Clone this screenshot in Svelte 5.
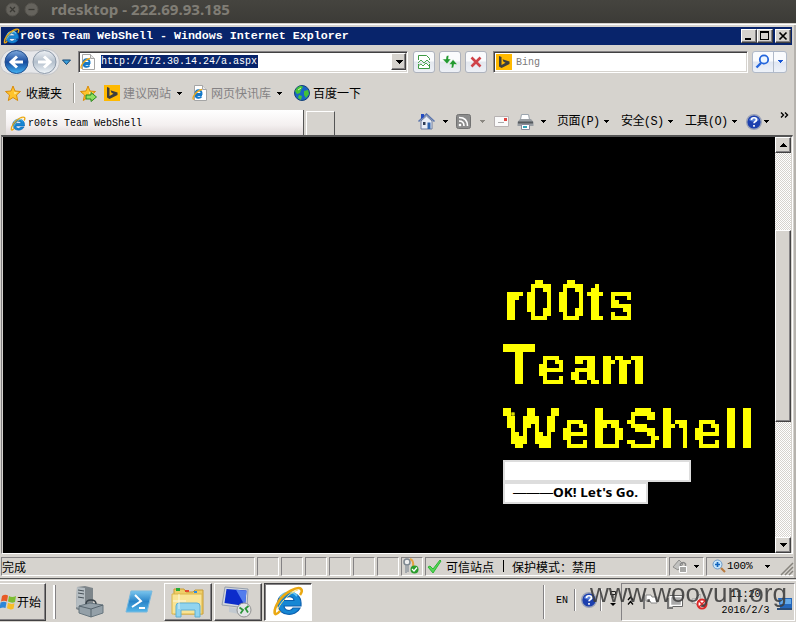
<script>
  const lines = [
    { text: 'r00ts', y: 47.7, sx: 0.88, xs: [1, 22.6, 54.6, 84, 103] },
    { text: 'Team', y: 111.7, sx: 0.89, xs: [-1, 34.5, 67, 97] },
    { text: 'W', y: 175.7, sx: 1.01, xs: [0] },
    { text: 'ebShell', y: 175.7, sx: 0.88, xs: [58.5, 89, 122, 157, 190.5, 221, 237] }
  ];
  const place = (xs, sx) => xs.map((x) => (x / sx).toFixed(1)).join(' ');
  const menus = ['页面(P)', '安全(S)', '工具(O)'];
  const emptyPanels = [1, 2, 3, 4, 5, 6];
</script>

{#snippet ie(size)}
  <svg width={size} height={size} viewBox="0 0 32 32">
    <circle cx="16.500" cy="17" r="9.500" fill="#fff" />
    <path d="M29 20H12c.5 5 7 6 9 2h7C24 31 7 31 5.500 18 5 4 29 2 29 17zM12 14.500h10c-.5-5-9-5-10 0z" fill="#1687d4" stroke="#0b5fae" stroke-width="1.200" />
    <path d="M8 12c3-6 12-8 17-2" fill="none" stroke="#64c6f5" stroke-width="2" />
    <path d="M8 25C1 33 1 24 7 15S26 0 29 3c1.500 1.500.5 4-1 6" fill="none" stroke="#eaa812" stroke-width="2.600" />
    <path d="M6 24c-1-3 11-18 20-20" fill="none" stroke="#ffe27a" stroke-width="1" />
  </svg>
{/snippet}

{#snippet page()}
  <svg width="16" height="16" viewBox="0 0 16 16">
    <path d="M2.500.5h8l4 4v11h-12z" fill="#fff" stroke="#a5a5a5" />
    <path d="M10.500.5v4h4" fill="#e7e7e7" stroke="#a5a5a5" />
    <path d="M10 10H3.500c.5 3.500 4.500 3.500 6 1.500M3.500 9c0-5 6.500-5 6 0z" fill="none" stroke="#1478c8" stroke-width="2" />
    <path d="M2 14C-1 15 3 6 10 4.500" fill="none" stroke="#e9a81e" stroke-width="1.300" />
  </svg>
{/snippet}

{#snippet bing()}
  <svg width="16" height="16" viewBox="0 0 16 16">
    <path d="M0 0h16v16H0z" fill="#ffb900" />
    <path d="M3 2l2.500 1v8l4-2.300-2-1L6.500 5.200 13.500 7.500v2.500L5.500 14 3 12.500z" fill="#3d3d3d" />
  </svg>
{/snippet}

{#snippet star()}
  <path d="M8 1l2 5 5.500.5-4 3.500 1.200 5.500L8 12.500 3.300 15.500 4.500 10 .5 6.500 6 6z" fill="#ffc32b" stroke="#d98c0b" />
  <path d="M8 3l1 4 4 .5-3.500 2z" fill="#ffe88e" />
{/snippet}

{#snippet help()}
  <svg width="16" height="16" viewBox="0 0 16 16">
    <circle cx="8" cy="8" r="7.300" fill="#1c3fae" stroke="#9aa2b8" stroke-width="1.400" />
    <path d="M3 6c1-4 9-4 10 0-3 2-7 2-10 0" fill="#5b82da" />
    <path d="M5.500 6c0-3 5-3 5 0 0 1.500-2.500 1.500-2.500 3.300M8 11v1.700" fill="none" stroke="#fff" stroke-width="1.700" />
  </svg>
{/snippet}

{#snippet caret(color)}
  <svg class="caret" width="5" height="3" viewBox="0 0 5 3" shape-rendering="crispEdges"><path d="M0 0h5v1H4v1H3v1H2V2H1V1H0z" fill={color} /></svg>
{/snippet}

<div class="screen">
  <header class="host">
    <span class="round"><svg width="13" height="13" viewBox="0 0 13 13"><circle cx="6.500" cy="6.500" r="6.500" fill="#65635d" stroke="#55534d" /><path d="M4 4l5 5M9 4l-5 5" stroke="#3a3934" stroke-width="1.300" /></svg></span>
    <span class="round"><svg width="13" height="13" viewBox="0 0 13 13"><circle cx="6.500" cy="6.500" r="6.500" fill="#65635d" stroke="#55534d" /><path d="M3.500 6.500h6" stroke="#3a3934" stroke-width="1.300" /></svg></span>
    <svg class="hosttitle" width="190" height="20"><text x="0" y="12" textLength="179" lengthAdjust="spacingAndGlyphs">rdesktop - 222.69.93.185</text></svg>
  </header>

  <div class="window">
    <div class="title">
      {@render ie(17)}
      <span>r00ts Team WebShell - Windows Internet Explorer</span>
      <div class="controls">
        <i><svg width="12" height="10" shape-rendering="crispEdges"><path d="M2 7h6v2H2z" /></svg></i>
        <i><svg width="12" height="10" shape-rendering="crispEdges"><path d="M1 0h9v9H1zM2 2v6h7V2z" fill-rule="evenodd" /></svg></i>
        <i class="close"><svg width="12" height="10"><path d="M2.500 1.500l7 7M9.500 1.500l-7 7" stroke="#000" stroke-width="1.700" /></svg></i>
      </div>
    </div>

    <div class="nav">
      <svg width="71" height="30" viewBox="0 0 71 30">
        <defs>
          <linearGradient id="blue" x2="0" y2="1"><stop stop-color="#7fa9dc" /><stop offset=".5" stop-color="#174b9d" /><stop offset="1" stop-color="#43b4f5" /></linearGradient>
          <linearGradient id="pale" x2="0" y2="1"><stop stop-color="#eef1f5" /><stop offset=".5" stop-color="#b3bfcc" /><stop offset="1" stop-color="#f1f6fa" /></linearGradient>
        </defs>
        <path d="M14 2Q29 6 43 2c19 0 19 26 0 26Q29 24 14 28-5 27-1 12 3 2 14 2" fill="#e6e7ea" stroke="#c4c5c8" />
        <circle cx="14.500" cy="15" r="11.500" fill="url(#blue)" stroke="#234f8d" />
        <circle cx="42.500" cy="15" r="11.500" fill="url(#pale)" stroke="#8b98a8" />
        <path d="M21 15H9m6-5.500L9 15l6 5.500" fill="none" stroke="#fff" stroke-width="3" />
        <path d="M36 15h12m-6-5.500l6 5.500-6 5.500" fill="none" stroke="#fff" stroke-width="3" />
        <path d="M60.500 13h8l-4 4.500z" fill="#3aa0dc" stroke="#174876" />
      </svg>
      <div class="address">
        {@render page()}
        <span class="url">http://172.30.14.24/a.aspx</span>
        <b class="drop"><svg width="7" height="4" shape-rendering="crispEdges"><path d="M0 0h7v1H6v1H5v1H4v1H3V3H2V2H1V1H0z" /></svg></b>
      </div>
      <div class="tools">
        <b><svg width="14" height="16" viewBox="0 0 14 16"><path d="M1.500 6V1.500h8l3 3V6M1.500 10v4.500h11V10" fill="#fff" stroke="#3c9a43" /><path d="M1 9l3-3 3 3 3-3 3 3M1 12l3-2 2 2 3-3 3 3" fill="none" stroke="#4da653" /></svg></b>
        <b><svg width="16" height="16" viewBox="0 0 16 16"><path d="M7 1.500C4 1 4 3 4 5H.5L5 10l4-5H6.500c0-1 0-2 .5-3.500zM9 14c3 .5 3-1.500 3-3.500h3.500L11 5.500l-4 5h2.500c0 1 0 2-.5 3.500z" fill="#239a31" stroke="#fff" stroke-width=".5" /></svg></b>
        <b><svg width="14" height="14" viewBox="0 0 14 14"><path d="M2.500 2.500l9 9M11.500 2.500l-9 9" stroke="#cf4248" stroke-width="2.600" /></svg></b>
      </div>
      <div class="search">{@render bing()}<span>Bing</span></div>
      <div class="go">
        <svg width="20" height="20" viewBox="0 0 20 20"><circle cx="11" cy="7.500" r="4.200" fill="#eef7ff" stroke="#2566dc" stroke-width="1.800" /><path d="M8 11l-4.500 4.500" stroke="#2566dc" stroke-width="2.400" /></svg>
        <em>{@render caret('#1655d5')}</em>
      </div>
    </div>

    <div class="favs">
      <svg width="16" height="16" viewBox="0 0 16 16">{@render star()}</svg>
      <span class="favlabel">收藏夹</span>
      <i class="rule"></i>
      <svg width="17" height="17" viewBox="0 0 17 17">{@render star()}<path d="M6 10h5V7.500l5.500 4.500-5.500 4.500V14H6z" fill="#8fe05e" stroke="#258a24" /></svg>
      <span class="bingico">{@render bing()}</span>
      <span class="dim">建议网站</span>{@render caret('#000')}
      <span class="pageico">{@render page()}</span>
      <span class="dim news">网页快讯库</span>{@render caret('#000')}
      <svg class="globe" width="16" height="16" viewBox="0 0 16 16"><circle cx="8" cy="8" r="7.500" fill="#1866c6" stroke="#154278" /><path d="M3 3c3-3 5-2 6-1L7 5 6 8 3 9 1 6zM10 6l4-1 1 4-3 4-2-3zM5 10l3 1-1 4-3-2z" fill="#43c237" /><path d="M4 5l3-2" stroke="#c8f4b0" /></svg>
      <span>百度一下</span>
    </div>

    <div class="tabs">
      <div class="tab">{@render ie(16)}<span>r00ts Team WebShell</span></div>
      <div class="newtab"></div>
      <div class="commands">
        <svg width="17" height="17" viewBox="0 0 17 17"><path d="M3 8v8h11V8L8.500 3z" fill="#e8edf6" stroke="#6c7da0" /><path d="M.5 8.500l8-7.500 8 7.500" fill="none" stroke="#5b75ad" stroke-width="1.600" /><path d="M3 1h3v3L3 6z" fill="#234bc1" /><path d="M9.500 9.500h3V16h-3z" fill="#2e63ae" /><path d="M5 9h2.500v3H5z" fill="#2d3b56" /></svg>
        {@render caret('#000')}
        <svg class="feed" width="15" height="15" viewBox="0 0 15 15"><rect x=".5" y=".5" width="14" height="14" rx="2" fill="#8c8c8c" stroke="#727272" /><circle cx="4" cy="11" r="1.300" fill="#fff" /><path d="M3 7q5 0 5 5M3 3.500q8.500 0 8.500 8.500" fill="none" stroke="#fff" stroke-width="1.600" /></svg>
        {@render caret('#8b8882')}
        <svg class="mail" width="15" height="11" viewBox="0 0 15 11"><path d="M.5.5h14v10H.5z" fill="#fafafa" stroke="#b7b2b2" /><path d="M10 2h3v3h-3z" fill="#df4540" /><path d="M4 6.500h6" stroke="#aaa" /></svg>
        <svg class="printer" width="17" height="16" viewBox="0 0 17 16"><path d="M4.500.5h7l1 5h-9z" fill="#fff" stroke="#9ba4ad" /><path d="M3 5h11l2.500 3v4H.5V8z" fill="#989da2" /><path d="M1 8.500h15" stroke="#55595d" stroke-width="2" /><path d="M4.500 10.500h8v5h-8z" fill="#fff" stroke="#889" /><path d="M6 12h4v2H6z" fill="#32a2b8" /></svg>
        {@render caret('#000')}
        {#each menus as menu}
          <span class="menu">{menu}</span>{@render caret('#000')}
        {/each}
        <span class="helpico">{@render help()}</span>{@render caret('#000')}
        <svg class="more" width="9" height="7"><path d="M1 .5l2.500 2.500L1 5.500M5 .5l2.500 2.500L5 5.500" fill="none" stroke="#000" stroke-width="1.400" /></svg>
      </div>
    </div>

    <div class="view">
      <main>
        <svg width="260" height="188">
          <filter id="blocks" filterUnits="userSpaceOnUse" x="0" y="0" width="260" height="188" color-interpolation-filters="sRGB">
            <feFlood x="1" y="0" width="1" height="1" flood-color="#fff" result="dot" />
            <feOffset in="dot" dx="0" dy="0" x="0" y="0" width="4" height="4" />
            <feTile result="grid" />
            <feComposite in="SourceGraphic" in2="grid" operator="in" />
            <feComponentTransfer><feFuncA type="linear" slope="200" intercept="-140" /></feComponentTransfer>
            <feOffset dx="0" dy="1" />
            <feMorphology operator="dilate" radius="1" result="a" />
            <feOffset in="a" dx="1" dy="0" result="b" />
            <feMerge result="c"><feMergeNode in="a" /><feMergeNode in="b" /></feMerge>
            <feOffset in="c" dx="0" dy="1" result="d" />
            <feMerge><feMergeNode in="c" /><feMergeNode in="d" /></feMerge>
          </filter>
          <g filter="url(#blocks)">
            {#each lines as line}
              <text class="big" transform="scale({line.sx} 1)" x={place(line.xs, line.sx)} y={line.y}>{line.text}</text>
            {/each}
          </g>
        </svg>
        <div class="input"></div>
        <div class="submit"><span>———</span><svg width="86" height="18"><text x="0" y="13" textLength="85" lengthAdjust="spacingAndGlyphs">OK! Let's Go.</text></svg></div>
      </main>
      <div class="scroll">
        <b><svg width="7" height="4" shape-rendering="crispEdges"><path d="M3 0h1v1h1v1h1v1h1v1H0V3h1V2h1V1h1z" /></svg></b>
        <b class="thumb"></b>
        <b class="down"><svg width="7" height="4" shape-rendering="crispEdges"><path d="M0 0h7v1H6v1H5v1H4v1H3V3H2V2H1V1H0z" /></svg></b>
      </div>
    </div>

    <div class="status">
      <div class="panel done">完成</div>
      {#each emptyPanels as p}<div class="panel small"></div>{/each}
      <div class="panel small"><svg width="18" height="16" viewBox="0 0 18 16"><circle cx="5" cy="4" r="3" fill="#eee" stroke="#7d8790" stroke-width="1.500" /><path d="M4 7v8M6 7v7" stroke="#939ba2" stroke-width="1.500" /><path d="M8 1q4 1 3 8" fill="none" stroke="#e5a341" stroke-width="2" /><circle cx="12.500" cy="11.500" r="4" fill="#2b9d2e" /><path d="M10 11l2 2 3-3.500" fill="none" stroke="#fff" stroke-width="1.300" /></svg></div>
      <div class="panel zone"><svg width="16" height="15" viewBox="0 0 16 15"><path d="M1 8l2-1 3 3 7-9 1 1-8 12z" fill="#55d556" stroke="#2db534" /></svg><span>可信站点</span><i></i><span>保护模式：禁用</span></div>
      <div class="panel lock"><svg width="18" height="15" viewBox="0 0 18 15"><path d="M1 8L7 1l4 4-5 6z" fill="#c1c1bf" stroke="#8f8f8d" /><path d="M8.500 7V5q3-3 5 0v2" fill="none" stroke="#888" stroke-width="1.500" /><path d="M7.500 7.500h7v6h-7z" fill="#a7a7a5" stroke="#fff" /></svg>{@render caret('#000')}</div>
      <div class="panel zoom"><svg width="14" height="14" viewBox="0 0 14 14"><circle cx="5.500" cy="5.500" r="4.500" fill="#c6e6fd" stroke="#6f9ac5" /><path d="M3 5.500h5M5.500 3v5" stroke="#1264bd" stroke-width="1.700" /><path d="M9 9l4 4" stroke="#b97b40" stroke-width="2.200" /></svg><span>100%</span>{@render caret('#000')}<svg class="grip" width="13" height="13"><path d="M1 13L13 1M5 13l8-8M9 13l4-4" stroke="#87847d" stroke-width="1.500" /></svg></div>
    </div>
  </div>

  <footer>
    <div class="start"><svg width="16" height="16" viewBox="0 0 16 16"><path d="M2 2q3-2 6-.5L7 7.500Q4 6 1 7.500z" fill="#e85a25" /><path d="M9 2q3 2 7 0l-1 6q-3 1.500-7-.5z" fill="#7dbd32" /><path d="M.5 8.500Q4 7 6.500 8.500l-1 5.500q-3-1-6 .5z" fill="#2d86d8" /><path d="M8 8.800q3 2 6.500.5l-1 5.500q-3 1.500-6.500-.5z" fill="#f8bd27" /></svg><span>开始</span></div>
    <i class="bar first"></i>
    <svg class="server" width="30" height="32" viewBox="0 0 30 32"><path d="M2 1l8-1 8 2v22l-8 3-9-4z" fill="#7d858a" /><path d="M2 1l8 1v22l-9-3z" fill="#b5bdc2" /><path d="M3 4l6 1M3 7l6 1M3 11l6 1" stroke="#475158" /><path d="M4 20l11-3 13 2v8l-12 4-12-4z" fill="#94a0a8" stroke="#68767f" /><path d="M4 20l12 3 12-4M16 23v8" fill="none" stroke="#57646d" /><path d="M11 18q0-4 5-4t5 4" fill="none" stroke="#39434a" stroke-width="1.500" /></svg>
    <svg class="shell" width="28" height="24" viewBox="0 0 28 24"><defs><linearGradient id="ps" x2="0" y2="1"><stop stop-color="#79c5ee" /><stop offset=".5" stop-color="#2a85c9" /><stop offset="1" stop-color="#54b5e8" /></linearGradient></defs><path d="M6 1h21l-5 21H1z" fill="url(#ps)" stroke="#77b8de" stroke-linejoin="round" /><path d="M10 5l6 6-9 6M14 18h6" fill="none" stroke="#fff" stroke-width="2" /></svg>
    <div class="task"><svg width="34" height="32" viewBox="0 0 34 32"><path d="M3 3h10l2 3h7l2-2h8v24H3z" fill="#efce67" stroke="#c79b35" /><path d="M5 2h4v3H5z" fill="#25aa34" /><path d="M14 4h4v2h-4z" fill="#e2482d" /><path d="M23 5h3v2h-3z" fill="#2d8de4" /><path d="M1 8h30v20H1z" fill="#f9e496" stroke="#dbb54b" /><path d="M5 31V20q0-3 3-3h18q3 0 3 3v11h-5v-7H10v7z" fill="#91d4ef" stroke="#60afd3" /><path d="M8 8v15M2 15h13" stroke="#fff" opacity=".7" /></svg></div>
    <div class="task second"><svg width="34" height="32" viewBox="0 0 34 32"><path d="M4 1l23 2-1 19-25-3z" fill="#d2d7df" stroke="#949eac" /><path d="M5.500 3l20 1.500-1.500 15.500-20.500-3z" fill="#0b2ccb" /><path d="M15 3.700l10.500 1-1.500 15z" fill="#527ded" /><path d="M8 21l10 2v5l-10-2z" fill="#c2c9d0" /><circle cx="23" cy="24" r="7" fill="#e3e5e7" stroke="#929292" /><path d="M18.500 21.500l3.500 2.500-2.500 3.500M27.500 20l-3 2.500 2.500 4" fill="none" stroke="#2e963b" stroke-width="1.800" /></svg></div>
    <div class="task active">{@render ie(32)}</div>
    <i class="bar langbar"></i>
    <span class="lang">EN</span>
    <i class="thin"></i>
    <span class="trayhelp">{@render help()}</span>
    <i class="thin last"></i>
    <svg class="opts" width="8" height="18"><path d="M1.500 1.500h5v3h-5zM4 4v4" fill="none" stroke="#222" /><path d="M1 13h6l-3 3z" /></svg>
    <div class="tray">
      <svg class="up" width="7" height="10"><path d="M1 4l2.500-3L6 4M1 8.500l2.500-3L6 8.500" fill="none" stroke="#000" stroke-width="1.300" /></svg>
      <svg class="flag" width="16" height="16"><path d="M2 1v15" stroke="#777" stroke-width="2" /><path d="M4 2h5l1 2h5v6H9L8 8H4z" fill="#fff" stroke="#888" /></svg>
      <svg class="net" width="16" height="16"><path d="M3.500 3.500h11v9h-11z" fill="#aaa" stroke="#fff" stroke-width="1.500" /><path d="M2.500 2.500h13v11h-10" fill="none" stroke="#666" /><path d="M1 5v10h5" fill="none" stroke="#777" stroke-width="2" /></svg>
      <svg class="sound" width="17" height="17"><path d="M1 6h3l5-5v13L4 10H1z" fill="#fff" stroke="#999" /><circle cx="11" cy="11" r="4.500" fill="#fff" stroke="#dc2929" stroke-width="2" /><path d="M8 8l6 6M8 14l6-6" stroke="#dc2929" stroke-width="1.500" /></svg>
      <div class="clock"><span>11:20</span><span>2016/2/3</span></div>
      <svg class="desk" width="15" height="13"><path d="M1 1h14v10H3z" fill="#2467ba" /><path d="M4 2h10v5H3z" fill="#64a9e8" /><path d="M0 12h15" stroke="#294d79" stroke-width="2" /></svg>
    </div>
  </footer>
  <svg class="mark" width="206" height="40"><text x="0" y="26" textLength="197" lengthAdjust="spacingAndGlyphs">www.wooyun.org</text></svg>
</div>

<style>
  :global(body) { margin: 0; }
  * { box-sizing: border-box; }
  svg { display: block; flex: none; overflow: visible; }
  i, b, em { display: block; flex: none; font-style: normal; }
  .screen { width: 796px; height: 622px; overflow: hidden; position: relative; background: #d6d3ce; font: 12px/16px "Liberation Mono", "Noto Sans CJK SC", monospace; color: #000; white-space: nowrap; }
  .caret { flex: none; }
  .host { height: 23px; display: flex; background: linear-gradient(#45443f, #3c3b37); padding: 3px 0 0 6px; }
  .round { width: 13px; margin-right: 6px; }
  .hosttitle { margin-left: 7px; font: bold 13.500px "Noto Sans", sans-serif; fill: #807d75; }
  .window { height: 555px; border-top: 1px solid #d6d3ce; box-shadow: inset 0 1px #fff, inset -2px 0 #b5b2ad; padding-top: 3px; }
  .title { height: 18px; margin: 0 4px 0 1px; background: #08246b; display: flex; align-items: center; padding-left: 2px; }
  .title span { font: bold 11.670px/18px "Liberation Mono", monospace; color: #fff; }
  .controls { display: flex; margin-left: auto; padding-right: 1px; }
  .controls i, .drop, .scroll b { background: #d6d3ce; border: 1px solid; border-color: #fff #424142 #424142 #fff; box-shadow: inset -1px -1px #848284; }
  .controls i { width: 16px; height: 14px; padding: 1px; }
  .controls .close { margin-left: 2px; }
  .nav { height: 33px; display: flex; align-items: center; padding-left: 2px; }
  .nav > * { flex: none; }
  .address { width: 330px; height: 22px; margin-left: 5px; display: flex; align-items: center; background: #fff; border: 1px solid; border-color: #848284 #fff #fff #848284; box-shadow: inset 1px 1px #424142, inset -1px -1px #d6d3ce; padding-left: 0; }
  .url { margin-left: 5px; background: #08246b; color: #fff; font-size: 10px; line-height: 13px; width: 157px; }
  .address svg:first-child { margin-left: 1px; }
  .drop { width: 15px; height: 17px; margin-left: auto; margin-right: 1px; padding: 6px 0 0 3px; }
  .tools { display: flex; gap: 4px; margin-left: 5px; }
  .tools b { width: 22px; height: 22px; display: flex; align-items: center; justify-content: center; border: 1px solid #aeb3be; border-radius: 3px; background: linear-gradient(#fafbfd 45%, #e3e7ee 50%, #edf0f6); }
  .search { width: 255px; height: 22px; margin-left: 6px; display: flex; align-items: center; gap: 4px; padding-left: 2px; background: #fff; border: 1px solid; border-color: #848284 #fff #fff #848284; box-shadow: inset 1px 1px #424142, inset -1px -1px #d6d3ce; color: #7b7979; font-size: 10px; }
  .search span { padding-top: 2px; }
  .go { width: 35px; height: 22px; margin-left: 4px; display: flex; border: 1px solid #b1bac9; border-radius: 3px; background: linear-gradient(#fafbfd 45%, #e0e6f2 50%, #eef2f9); }
  .go em { border-left: 1px solid #b1bac9; padding: 8px 0 0 4px; width: 13px; }
  .favs { height: 30px; display: flex; align-items: center; padding-left: 5px; font-family: "Noto Sans CJK SC", sans-serif; }
  .favlabel { margin-left: 5px; }
  .rule { width: 2px; height: 20px; margin: 0 5px 0 11px; background: #9c9a94; border-right: 1px solid #fff; }
  .bingico { margin: 0 3px 0 7px; }
  .dim { color: #848284; margin-right: 6px; width: 48px; }
  .news { width: 60px; }
  .pageico { margin: 0 3px 0 10px; }
  .globe { margin: 0 3px 0 12px; }
  .tabs { height: 27px; display: flex; align-items: flex-end; padding-left: 6px; }
  .tab { width: 298px; height: 25px; background: linear-gradient(#fff, #f4f0f0 60%, #dfd8d8); border-right: 1px solid #555; display: flex; align-items: center; gap: 2px; padding: 3px 0 0 4px; font-size: 10px; }
  .newtab { width: 29px; height: 24px; margin-left: 2px; border: 1px solid #fff; border-right: 1px solid #555; border-bottom: 0; }
  .commands { display: flex; align-items: center; height: 27px; margin-left: 83px; }
  .commands > .caret { margin-left: 8px; }
  .feed { margin-left: 8px; }
  .commands .feed + .caret { margin-left: 9px; }
  .mail { margin-left: 9px; }
  .printer { margin-left: 8px; }
  .commands .printer + .caret { margin-left: 7px; }
  .menu { width: 42px; margin-left: 11px; font-size: 12px; letter-spacing: -0.600px; }
  .commands .menu + .caret { margin-left: 5px; margin-right: 1px; }
  .helpico { margin-left: 8px; }
  .commands .helpico + .caret { margin-left: 2px; }
  .more { margin: -13px 0 0 11px; }
  .view { height: 419px; margin: 0 3px 0 1px; display: flex; border: 1px solid; border-color: #848284 #fff #fff #848284; border-top: 2px solid #555; padding-left: 1px; background: #d6d3ce; }
  main { width: 772px; background: #000; padding: 135px 0 0 500px; }
  .big { font: bold 58.200px "Liberation Sans", Arial, sans-serif; fill: #ff0; }
  .input { width: 188px; height: 22px; background: #fff; border: 2px solid #ddd; }
  .submit { width: 145px; height: 22px; background: #fff; border: 2px solid #ddd; display: flex; align-items: center; padding-left: 8px; font-size: 13.330px; font-family: "Liberation Sans", sans-serif; }
  .submit span { width: 40px; }
  .submit svg { font: bold 13px "Noto Sans", sans-serif; }
  .scroll { width: 16px; display: flex; flex-direction: column; background: repeating-conic-gradient(#fff 0 25%, #d6d3ce 0 50%) 0 0 / 2px 2px; }
  .scroll b { width: 16px; height: 16px; padding: 5px 0 0 4px; }
  .scroll .thumb { height: 192px; margin-top: 77px; }
  .scroll .down { margin-top: auto; }
  .status { height: 22px; display: flex; align-items: center; gap: 2px; padding: 2px 2px 0 1px; font: 12px/17px "Noto Sans CJK SC", sans-serif; }
  .panel { height: 19px; display: flex; align-items: center; flex: none; border: 1px solid; border-color: #848284 #fff #fff #848284; }
  .done { width: 254px; padding-left: 0; }
  .small { width: 22px; }
  .zone { width: 242px; padding-left: 1px; }
  .zone span:nth-of-type(1) { margin-left: 3px; }
  .zone i { width: 1px; height: 12px; background: #000; margin: 0 8px 0 9px; }
  .lock { width: 35px; padding-left: 2px; gap: 4px; }
  .zoom { width: 87px; padding-left: 5px; border-right: 0; }
  .zoom span { font: 11px/16px "Liberation Mono", monospace; margin-left: 1px; width: 26px; letter-spacing: -.3px; }
  .zoom .caret { margin-left: 12px; }
  .zoom .grip { margin: 4px 0 0 10px; }
  footer { height: 44px; border-top: 1px solid #555; box-shadow: inset 0 1px #d6d3ce, inset 0 2px #fff; display: flex; align-items: flex-start; padding-top: 4px; }
  footer > * { flex: none; }
  .start, .task { border: 1px solid; border-color: #fff #424142 #424142 #fff; box-shadow: inset -1px -1px #848284; height: 38px; display: flex; align-items: center; }
  .start { width: 46px; border-left: 0; font-family: "Noto Sans CJK SC", sans-serif; }
  .start span { margin-left: 1px; }
  .bar { width: 3px; height: 34px; margin-top: 2px; background: #fff; border-right: 1px solid #848284; }
  .first { margin-left: 7px; }
  .server { margin: 3px 0 0 19px; }
  .shell { margin: 7px 0 0 20px; }
  .task { width: 48px; margin-left: 11px; justify-content: center; }
  .task.second { margin-left: 2px; }
  .task.active { margin-left: 2px; background: #fff; border-color: #424142 #fff #fff #424142; box-shadow: inset 1px 1px #848284; }
  .langbar { margin-left: 231px; background: #848284; border-color: #fff; width: 2px; }
  .lang { font: 10px/16px "Liberation Mono", monospace; margin: 10px 0 0 11px; width: 13px; }
  .thin { width: 2px; height: 22px; margin: 6px 0 0 5px; background: #848284; border-right: 1px solid #fff; }
  .trayhelp { margin: 9px 0 0 5px; }
  .thin.last { margin-left: 3px; }
  .opts { margin: 7px 0 0 7px; }
  .tray { width: 174px; height: 38px; margin-left: 4px; border: 1px solid; border-color: #848284 #fff #fff #848284; display: flex; }
  .up { margin: 12px 0 0 5px; }
  .flag { margin: 9px 0 0 8px; }
  .net { margin: 9px 0 0 9px; }
  .sound { margin: 9px 0 0 8px; }
  .clock { width: 49px; margin: 3px 0 0 13px; text-align: center; font-size: 10px; display: flex; flex-direction: column; }
  .desk { margin: 13px 0 0 7px; }
  .mark { position: absolute; left: 590px; top: 576px; font: 26px "Liberation Sans", Arial, sans-serif; fill: #3c3c3c; opacity: .88; }
</style>
